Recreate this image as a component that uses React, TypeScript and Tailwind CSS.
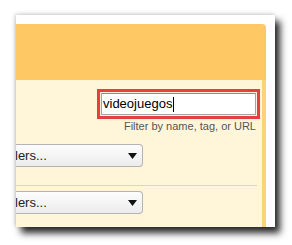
function Arrow() {
  return (
    <svg width="9" height="6" viewBox="0 0 9 6" className="block">
      <path d="M0 0 H9 L4.5 6 Z" fill="#111" />
    </svg>
  );
}

function Select() {
  return (
    <div className="w-[127px] h-[23px] flex items-center justify-between pr-[5px] border border-l-0 border-[#b4b4b4] rounded-r-[4px] bg-gradient-to-b from-[#fdfdfd] to-[#ececec] text-[13px] text-[#222]">
      <span className="-ml-[1px]">lers...</span>
      <Arrow />
    </div>
  );
}

export default function App() {
  return (
    <div className="w-[292px] h-[245px] bg-white pt-[15px] pl-[16px] font-['Liberation_Sans',Arial,sans-serif]">
      <div className="w-[259px] h-[212px] bg-white pt-[9px] pr-[9px] shadow-[5px_6px_7px_rgba(0,0,0,0.85),-1px_-1px_4px_rgba(0,0,0,0.2)] overflow-hidden">
        <div className="h-[56px] bg-[#fec965] rounded-tr-[4px]"></div>
        <div className="h-[147px] bg-[#fff5d9] border-r-[4px] border-[#fdd27c] flex flex-col">
          <div className="flex flex-col items-end pr-[2px] pt-[9px]">
            <div className="w-[163px] h-[30px] border-[3px] border-[#e5403e] bg-[#fdf1e4] p-[1px]">
              <div className="h-full border border-[#a4a4a4] border-t-[#8c8c8c] bg-white flex items-center pl-[1px] text-[13px] text-black">
                <span>videojuegos</span>
                <span className="w-px h-[15px] bg-black ml-[1px]"></span>
              </div>
            </div>
            <div className="mt-[1px] pr-[4px] text-[11px] leading-[13px] text-[#555]">Filter by name, tag, or URL</div>
          </div>
          <div className="mt-[11px]">
            <Select />
          </div>
          <div className="mt-[18px] mr-[5px] h-px bg-[#f3d48e]"></div>
          <div className="mt-[5px]">
            <Select />
          </div>
        </div>
      </div>
    </div>
  );
}
